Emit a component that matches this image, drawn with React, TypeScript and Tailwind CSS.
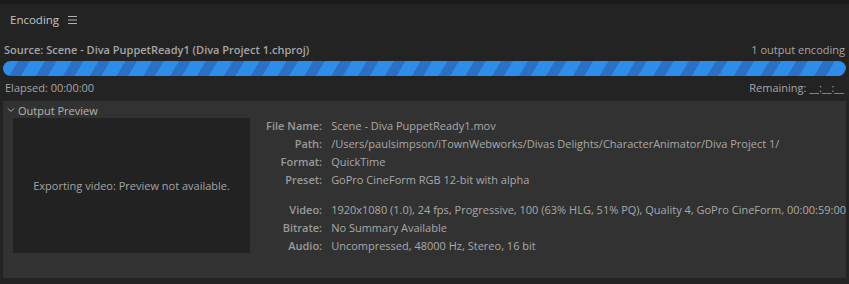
const rows1 = [
  ['File Name:', 'Scene - Diva PuppetReady1.mov'],
  ['Path:', '/Users/paulsimpson/iTownWebworks/Divas Delights/CharacterAnimator/Diva Project 1/'],
  ['Format:', 'QuickTime'],
  ['Preset:', 'GoPro CineForm RGB 12-bit with alpha'],
];

const rows2 = [
  ['Video:', '1920x1080 (1.0), 24 fps, Progressive, 100 (63% HLG, 51% PQ), Quality 4, GoPro CineForm, 00:00:59:00'],
  ['Bitrate:', 'No Summary Available'],
  ['Audio:', 'Uncompressed, 48000 Hz, Stereo, 16 bit'],
];

function InfoRow({ label, value }: { label: string; value: string }) {
  return (
    <div className="flex h-[18px] items-center">
      <span className="w-[71px] shrink-0 text-right font-semibold text-[#9a9a9a]">{label}</span>
      <span className="ml-[9px] whitespace-nowrap text-[#a9a9a9]">{value}</span>
    </div>
  );
}

export default function App() {
  return (
    <div
      className="flex h-[284px] w-[849px] flex-col overflow-hidden bg-[#1b1b1b] text-[11px] leading-none text-[#b0b0b0]"
      style={{ fontFamily: '"Open Sans", "Noto Sans", sans-serif' }}
    >
      <div className="mt-[4px] flex flex-1 flex-col bg-[#232323]">
        {/* panel tab */}
        <div className="flex h-[31px] items-center pl-[10px]">
          <span className="text-[11.5px] text-[#c4c4c4]">Encoding</span>
          <svg className="ml-[9px]" width="9" height="8" viewBox="0 0 9 8">
            <path d="M0 0.5h9M0 4h9M0 7.5h9" stroke="#b0b0b0" strokeWidth="1" />
          </svg>
        </div>

        <div className="flex h-[26px] items-center justify-between px-[4px] pt-[2px]">
          <span className="font-semibold text-[#a6a6a6]">Source: Scene - Diva PuppetReady1 (Diva Project 1.chproj)</span>
          <span className="text-[#a6a6a6]">1 output encoding</span>
        </div>

        <div
          className="mx-[3px] h-[15px] rounded-full"
          style={{
            backgroundImage:
              'repeating-linear-gradient(121deg, #2e8de9 0px, #2e8de9 13px, #2a70c4 13px, #2a70c4 23px)',
          }}
        />

        <div className="flex h-[22px] items-center justify-between px-[5px]">
          <span className="text-[#a6a6a6]">Elapsed: 00:00:00</span>
          <span className="text-[#a6a6a6]">Remaining: __:__:__</span>
        </div>

        <div className="mx-[3px] mb-[6px] mt-[3px] flex flex-1 flex-col bg-[#323232]">
          <div className="flex h-[17px] items-center pl-[4px] pt-[1px] text-[#b4b4b4]">
            <svg width="8" height="6" viewBox="0 0 8 6">
              <path d="M1 1.5l3 3 3-3" fill="none" stroke="#b0b0b0" strokeWidth="1" />
            </svg>
            <span className="ml-[3px]">Output Preview</span>
          </div>
          <div className="flex">
            <div className="ml-[10px] flex h-[135px] w-[240px] items-center justify-center bg-[#222222] text-[#a4a4a4]">
              Exporting video: Preview not available.
            </div>
            <div className="-mt-[2px] ml-[1px] flex flex-col">
              {rows1.map(([l, v]) => (
                <InfoRow key={l} label={l} value={v} />
              ))}
              <div className="h-[12px]" />
              {rows2.map(([l, v]) => (
                <InfoRow key={l} label={l} value={v} />
              ))}
            </div>
          </div>
        </div>
      </div>
    </div>
  );
}
